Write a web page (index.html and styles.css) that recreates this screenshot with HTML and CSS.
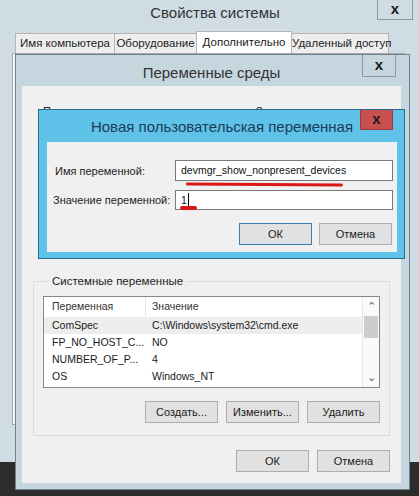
FILE: index.html
```html
<!DOCTYPE html>
<html lang="ru">
<head>
  <meta charset="UTF-8">
  <title>Свойства системы</title>
  <link rel="stylesheet" href="styles.css">
</head>
<body>
  <div class="desktop">

    <div class="window sysprops">
      <div class="titlebar">
        <span class="title">Свойства системы</span>
        <span class="close">x</span>
      </div>
      <div class="tabs">
        <span class="tab tab-name">Имя компьютера</span>
        <span class="tab tab-hw">Оборудование</span>
        <span class="tab tab-adv active">Дополнительно</span>
        <span class="tab tab-remote">Удаленный доступ</span>
      </div>
      <div class="tab-panel"></div>
    </div>

    <div class="window envvars">
      <div class="titlebar">
        <span class="title">Переменные среды</span>
        <span class="close">x</span>
      </div>
      <div class="env-body">
        <div class="user-list">
          <span class="col-name">Переменная</span>
          <span class="col-value">Значение</span>
        </div>

        <fieldset class="groupbox">
          <legend>Системные переменные</legend>
          <div class="listview">
            <div class="list-main">
              <div class="list-row list-head">
                <span class="col-name">Переменная</span>
                <span class="col-value">Значение</span>
              </div>
              <div class="list-row selected">
                <span class="col-name">ComSpec</span>
                <span class="col-value">C:\Windows\system32\cmd.exe</span>
              </div>
              <div class="list-row">
                <span class="col-name">FP_NO_HOST_C...</span>
                <span class="col-value">NO</span>
              </div>
              <div class="list-row">
                <span class="col-name">NUMBER_OF_P...</span>
                <span class="col-value">4</span>
              </div>
              <div class="list-row">
                <span class="col-name">OS</span>
                <span class="col-value">Windows_NT</span>
              </div>
              <div class="list-row">
                <span class="col-name">Path</span>
                <span class="col-value">C:\Windows\system32;C:\Windows;</span>
              </div>
            </div>
            <div class="scrollbar">
              <span class="arrow">&#8963;</span>
              <span class="thumb"></span>
              <span class="track"></span>
              <span class="arrow">&#8964;</span>
            </div>
          </div>
          <div class="button-row">
            <button class="btn">Создать...</button>
            <button class="btn">Изменить...</button>
            <button class="btn">Удалить</button>
          </div>
        </fieldset>

        <div class="button-row dialog-buttons">
          <button class="btn">ОК</button>
          <button class="btn">Отмена</button>
        </div>
      </div>
    </div>

    <div class="window newvar">
      <div class="titlebar">
        <span class="title">Новая пользовательская переменная</span>
        <span class="close">x</span>
      </div>
      <div class="newvar-body">
        <div class="field">
          <label class="field-label">Имя переменной:</label>
          <div class="input">devmgr_show_nonpresent_devices</div>
        </div>
        <div class="field field-value">
          <label class="field-label">Значение переменной:</label>
          <div class="input">1<span class="caret"></span></div>
        </div>
        <div class="button-row">
          <button class="btn default">ОК</button>
          <button class="btn">Отмена</button>
        </div>
        <span class="mark mark-name"></span>
        <span class="mark mark-value"></span>
      </div>
    </div>

  </div>
</body>
</html>
```

FILE: styles.css
```css
* {
  margin: 0;
  padding: 0;
  box-sizing: border-box;
}

body {
  font-family: 'Liberation Sans', Arial, sans-serif;
  font-size: 11px;
  color: #1a1a1a;
  background: #2c2c2c;
}

.desktop {
  position: relative;
  width: 419px;
  height: 496px;
  overflow: hidden;
  background: #2c2c2c;
}

/* windows on the desktop */
.window {
  position: absolute;
  display: flex;
  flex-direction: column;
}

.titlebar {
  position: relative;
  display: flex;
  justify-content: center;
  flex-shrink: 0;
}

.title {
  color: #333;
  font-size: 15px;
}

.close {
  position: absolute;
  top: 0;
  display: flex;
  align-items: center;
  justify-content: center;
  font-weight: 700;
  font-size: 15px;
  line-height: 1;
  padding-bottom: 3px;
  color: #1a1a1a;
  border: 1px solid #8e9aa2;
  border-top: none;
}

.btn {
  font-family: inherit;
  font-size: 11px;
  color: #1a1a1a;
  background: #e1e1e1;
  border: 1px solid #adadad;
  height: 22px;
  width: 73px;
}

.btn.default {
  border-color: #3c7fb1;
}

.button-row {
  display: flex;
  justify-content: flex-end;
  gap: 8px;
}

/* System properties (back window) */
.sysprops {
  left: 0;
  top: 0;
  width: 430px;
  height: 462px;
  background: #cfdce4;
}

.sysprops .titlebar {
  height: 31px;
  padding-top: 4px;
}

.sysprops .close {
  left: 377px;
  width: 36px;
  height: 20px;
}

.tabs {
  display: flex;
  align-items: flex-end;
  height: 22px;
  padding-left: 15px;
}

.tab {
  height: 20px;
  line-height: 19px;
  text-align: center;
  background: #eeeeee;
  border: 1px solid #b4b4b4;
  border-bottom: none;
  margin-right: -1px;
  color: #222;
  font-size: 11.5px;
  white-space: nowrap;
}

.tab-name { width: 100px; }
.tab-hw { width: 83px; }
.tab-adv { width: 96px; }
.tab-remote { width: 98px; }

.tab.active {
  height: 22px;
  line-height: 20px;
  background: #fff;
  position: relative;
  z-index: 1;
}

.tab-panel {
  margin-left: 12px;
  width: 393px;
  height: 372px;
  background: #f4f6f7;
  border: 1px solid #a8a8a8;
}

/* Environment variables */
.envvars {
  left: 15px;
  top: 54px;
  width: 395px;
  height: 436px;
  background: #c6d6df;
  border: 1px solid #6f818c;
  padding: 0 8px 6px 6px;
}

.envvars .titlebar {
  height: 31px;
  padding-top: 9px;
}

.envvars .close {
  right: 5px;
  width: 34px;
  height: 22px;
}

.env-body {
  flex: 1;
  display: flex;
  flex-direction: column;
  background: #f0f0f0;
  padding: 0 11px 11px 11px;
}

.user-list {
  display: flex;
  height: 188px;
  padding-top: 19px;
  padding-left: 10px;
  color: #222;
}

.col-name {
  width: 101px;
  padding-left: 8px;
  flex-shrink: 0;
  white-space: nowrap;
}

.col-value {
  padding-left: 6px;
  white-space: nowrap;
}

.user-list .col-name {
  padding-left: 0;
  width: 207px;
}

.groupbox {
  border: 1px solid #dcdcdc;
  padding: 8px 9px 14px 9px;
  height: 162px;
}

.groupbox legend {
  margin-left: 6px;
  padding: 0 3px;
  color: #222;
  font-size: 11.5px;
  line-height: 14px;
}

.listview {
  display: flex;
  height: 92px;
  background: #fff;
  border: 1px solid #828790;
  overflow: hidden;
  font-size: 10.5px;
}

.list-main {
  flex: 1;
  overflow: hidden;
}

.list-row {
  display: flex;
  height: 17px;
  line-height: 17px;
}

.list-row .col-value {
  border-left: 1px solid transparent;
}

.list-head {
  height: 20px;
  line-height: 19px;
  color: #333;
}

.list-head .col-value {
  border-left: 1px solid #e5e5e5;
}

.list-row.selected {
  background: #ededed;
}

.scrollbar {
  width: 17px;
  display: flex;
  flex-direction: column;
  background: #fafafa;
  border-left: 1px solid #e6e6e6;
}

.arrow {
  height: 19px;
  display: flex;
  align-items: center;
  justify-content: center;
  color: #606060;
  font-size: 11px;
}

.thumb {
  height: 22px;
  background: #cdcdcd;
  margin: 0 1px;
}

.track {
  flex: 1;
}

.groupbox .button-row {
  margin-top: 13px;
}

.dialog-buttons {
  margin-top: auto;
}

/* New user variable dialog */
.newvar {
  left: 38px;
  top: 109px;
  width: 367px;
  height: 150px;
  background: #5fc2e9;
  border: 1px solid #2a6b8c;
  padding: 0 7px 7px 8px;
}

.newvar .titlebar {
  height: 32px;
  padding-top: 8px;
}

.newvar .title {
  color: #1d3c58;
  font-size: 15px;
}

.newvar .close {
  right: 4px;
  width: 33px;
  height: 20px;
  background: #c75050;
  border: 1px solid #9f3a3a;
  border-top: none;
}

.newvar-body {
  position: relative;
  flex: 1;
  display: flex;
  flex-direction: column;
  background: #f0f0f0;
  padding: 18px 5px 7px 0;
}

.field {
  display: flex;
  align-items: center;
}

.field-label {
  width: 128px;
  flex-shrink: 0;
  padding-left: 8px;
  color: #222;
  font-size: 11px;
  white-space: nowrap;
}

.field-value {
  margin-top: 9px;
}

.field-value .field-label {
  padding-left: 6px;
}

.input {
  flex: 1;
  margin-right: -1px;
  height: 21px;
  line-height: 19px;
  padding-left: 5px;
  background: #fff;
  border: 1px solid #7a7a7a;
  color: #111;
  font-size: 10.5px;
}

.field-value .input {
  height: 20px;
  line-height: 18px;
}

.caret {
  display: inline-block;
  width: 1px;
  height: 13px;
  background: #000;
  vertical-align: -2px;
  margin-left: 1px;
}

.newvar-body .button-row {
  margin-top: 13px;
  gap: 7px;
}

/* red highlight strokes over the fields */
.mark {
  position: absolute;
  background: #d81818;
  border-radius: 2px;
}

.mark-name {
  left: 139px;
  top: 41px;
  width: 157px;
  height: 3px;
  transform: rotate(0.4deg);
}

.mark-value {
  left: 133px;
  top: 64px;
  width: 17px;
  height: 4px;
}
```
